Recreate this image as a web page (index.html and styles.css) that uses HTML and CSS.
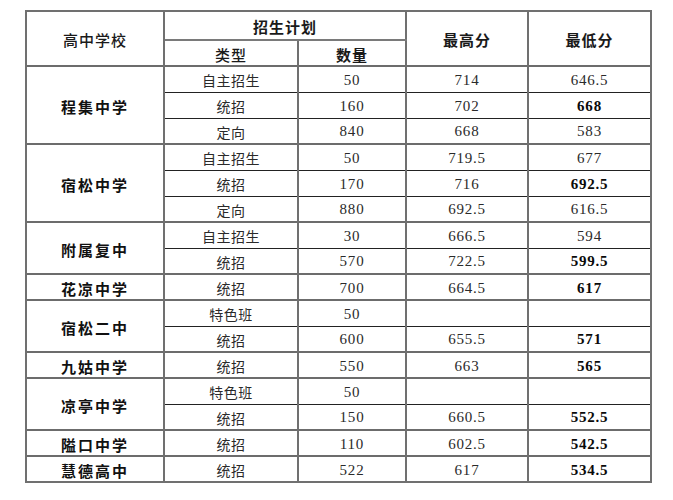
FILE: index.html
```html
<!DOCTYPE html>
<html lang="zh">
<head>
<meta charset="utf-8">
<link rel="stylesheet" href="styles.css">
</head>
<body>
<table class="score">
  <colgroup>
    <col class="c-school"><col class="c-type"><col class="c-num"><col class="c-max"><col class="c-min">
  </colgroup>
  <thead>
    <tr class="h1">
      <th rowspan="2" class="hd light">高中学校</th>
      <th colspan="2" class="hd">招生计划</th>
      <th rowspan="2" class="hd">最高分</th>
      <th rowspan="2" class="hd">最低分</th>
    </tr>
    <tr class="h2">
      <th class="hd light">类型</th>
      <th class="hd">数量</th>
    </tr>
  </thead>
  <tbody class="grp">
    <tr><td rowspan="3" class="name">程集中学</td><td class="type">自主招生</td><td class="num">50</td><td class="num">714</td><td class="num">646.5</td></tr>
    <tr><td class="type">统招</td><td class="num">160</td><td class="num">702</td><td class="num b">668</td></tr>
    <tr><td class="type">定向</td><td class="num">840</td><td class="num">668</td><td class="num">583</td></tr>
  </tbody>
  <tbody class="grp">
    <tr><td rowspan="3" class="name">宿松中学</td><td class="type">自主招生</td><td class="num">50</td><td class="num">719.5</td><td class="num">677</td></tr>
    <tr><td class="type">统招</td><td class="num">170</td><td class="num">716</td><td class="num b">692.5</td></tr>
    <tr><td class="type">定向</td><td class="num">880</td><td class="num">692.5</td><td class="num">616.5</td></tr>
  </tbody>
  <tbody class="grp">
    <tr><td rowspan="2" class="name">附属复中</td><td class="type">自主招生</td><td class="num">30</td><td class="num">666.5</td><td class="num">594</td></tr>
    <tr><td class="type">统招</td><td class="num">570</td><td class="num">722.5</td><td class="num b">599.5</td></tr>
  </tbody>
  <tbody class="grp">
    <tr><td class="name">花凉中学</td><td class="type">统招</td><td class="num">700</td><td class="num">664.5</td><td class="num b">617</td></tr>
  </tbody>
  <tbody class="grp">
    <tr><td rowspan="2" class="name">宿松二中</td><td class="type">特色班</td><td class="num">50</td><td class="num"></td><td class="num"></td></tr>
    <tr><td class="type">统招</td><td class="num">600</td><td class="num">655.5</td><td class="num b">571</td></tr>
  </tbody>
  <tbody class="grp">
    <tr><td class="name">九姑中学</td><td class="type">统招</td><td class="num">550</td><td class="num">663</td><td class="num b">565</td></tr>
  </tbody>
  <tbody class="grp">
    <tr><td rowspan="2" class="name">凉亭中学</td><td class="type">特色班</td><td class="num">50</td><td class="num"></td><td class="num"></td></tr>
    <tr><td class="type">统招</td><td class="num">150</td><td class="num">660.5</td><td class="num b">552.5</td></tr>
  </tbody>
  <tbody class="grp">
    <tr><td class="name">隘口中学</td><td class="type">统招</td><td class="num">110</td><td class="num">602.5</td><td class="num b">542.5</td></tr>
  </tbody>
  <tbody class="grp">
    <tr><td class="name">慧德高中</td><td class="type">统招</td><td class="num">522</td><td class="num">617</td><td class="num b">534.5</td></tr>
  </tbody>
</table>
</body>
</html>
```
FILE: styles.css
```css
html, body {
  background: #ffffff;
}
body {
  margin: 0;
  padding: 10px 0 0 25px;
  font-family: "Noto Sans CJK SC", "Noto Sans", sans-serif;
  color: #1e1e1e;
}
.score {
  border-collapse: collapse;
  table-layout: fixed;
  width: 625px;
  border: 2px solid #707070;
}
.c-school { width: 138px; }
.c-type { width: 134px; }
.c-num { width: 108px; }
.c-max { width: 122px; }
.c-min { width: 123px; }

.score th, .score td {
  padding: 2px 0 0 0;
  text-align: center;
  vertical-align: middle;
  line-height: 1;
  border-left: 2px solid #707070;
  border-right: 2px solid #707070;
  border-top: 1px solid #222222;
  border-bottom: 1px solid #222222;
}
.h1 { height: 29px; }
.h2 { height: 26px; }
.h1 th[colspan] { border-bottom: 2px solid #7a7a7a; }
.score tbody tr { height: 26px; }
.score tbody.grp { border-top: 2px solid #6c6c6c; }
.score thead { border-bottom: 1px solid #222222; }

.hd {
  font-size: 15px;
  font-weight: 700;
  letter-spacing: 1px;
  color: #1a1a1a;
}
.hd.light {
  font-weight: 500;
}
.name {
  font-size: 15px;
  font-weight: 700;
  letter-spacing: 2px;
  color: #111111;
}
.type {
  font-size: 14px;
  font-weight: 400;
  letter-spacing: 0.5px;
  color: #2a2a2a;
}
.num {
  font-family: "Liberation Serif", "DejaVu Serif", serif;
  font-size: 15px;
  letter-spacing: 0.8px;
  color: #2a2a2a;
}
.num.b {
  font-weight: 700;
  color: #0a0a0a;
}
```
